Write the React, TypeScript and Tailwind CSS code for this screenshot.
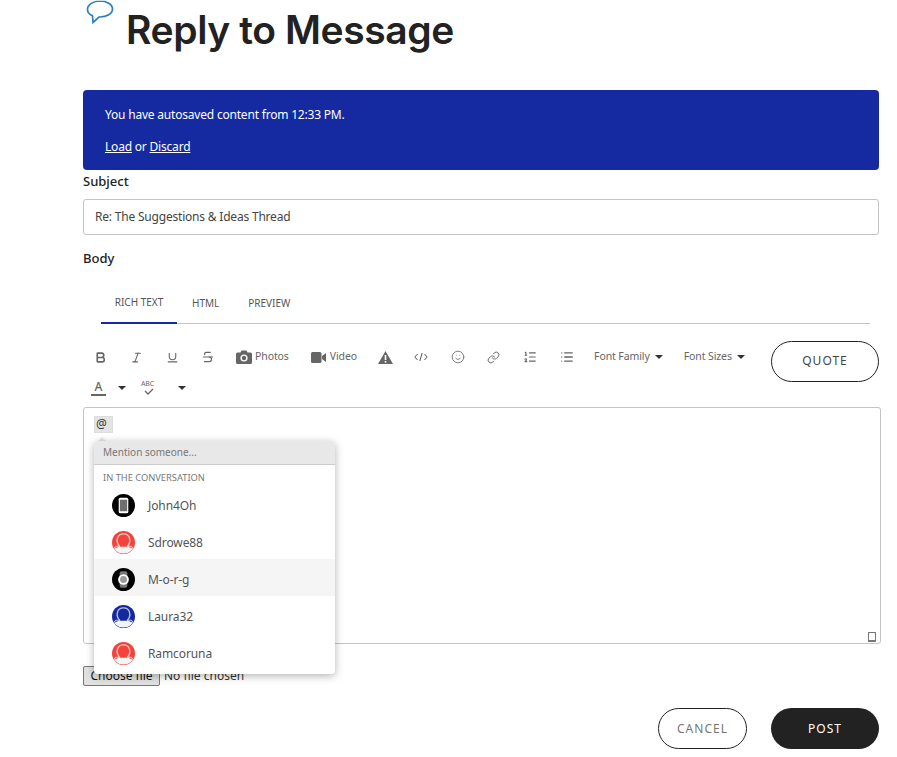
import { Bold, Italic, Link, List, ListOrdered, Smile, Strikethrough, Underline } from 'lucide-react'

const font = "font-['Noto_Sans','Open_Sans',sans-serif]"

function Avatar({ kind }: { kind: string }) {
  if (kind === 'phone') {
    return (
      <svg width="23" height="23" viewBox="0 0 24 24">
        <circle cx="12" cy="12" r="12" fill="#000" />
        <rect x="7" y="4" width="10" height="16" rx="1.6" fill="#fff" />
        <rect x="8.2" y="6" width="7.6" height="12" fill="#6f6f6f" />
      </svg>
    )
  }
  if (kind === 'watch') {
    return (
      <svg width="23" height="23" viewBox="0 0 24 24">
        <circle cx="12" cy="12" r="12" fill="#000" />
        <rect x="8" y="3.5" width="8" height="17" rx="2" fill="#777" />
        <circle cx="12" cy="12" r="5.6" fill="#fff" />
        <circle cx="12" cy="12" r="3.6" fill="#9a9a9a" />
      </svg>
    )
  }
  const color = kind === 'blue' ? '#1428a0' : '#f4433c'
  return (
    <svg width="23" height="23" viewBox="0 0 24 24">
      <circle cx="12" cy="12" r="12" fill={color} />
      <path d="M2.2 18.5A12 12 0 0 0 21.8 18.5L17 16.5H7Z" fill="#f1f5f3" />
      <path d="M8 16C3.5 11 5 3 12 3S20.5 11 16 16" fill="none" stroke="#fff" strokeOpacity="0.7" strokeWidth="1.4" />
      <path d="M8.5 16H4L2.2 17.8M15.5 16H20L21.8 17.8" fill="none" stroke="#fff" strokeOpacity="0.7" strokeWidth="1.1" />
    </svg>
  )
}

const people = [
  { name: 'John4Oh', kind: 'phone', active: false },
  { name: 'Sdrowe88', kind: 'red', active: false },
  { name: 'M-o-r-g', kind: 'watch', active: true },
  { name: 'Laura32', kind: 'blue', active: false },
  { name: 'Ramcoruna', kind: 'red', active: false },
]

function Caret({ className = '' }: { className?: string }) {
  return (
    <svg width="8" height="4" viewBox="0 0 8 4" className={className}>
      <path d="M0 0h8L4 4z" fill="#333" />
    </svg>
  )
}

function IconBtn({ children }: { children: React.ReactNode }) {
  return <span className="flex w-[36px] items-center justify-center">{children}</span>
}

export default function App() {
  return (
    <div className={`${font} relative h-[757px] w-[897px] overflow-hidden bg-white pl-[83px] pr-[18px] text-[#222]`}>
      {/* 标题 */}
      <div className="relative h-[90px]">
        <svg width="28" height="25" viewBox="0 0 28 25" className="absolute left-[3px] top-0" fill="none">
          <path d="M14 1C7.4 1 1.5 4.5 1.5 9.5c0 2.8 2 5 5 6.3L7 22.5l6-5.5h1c6.6 0 12.5-3.2 12.5-8S20.6 1 14 1z" stroke="#2c7fb8" strokeWidth="1.7" />
        </svg>
        <h1 className="pl-[43px] pt-[6px] font-['Inter',sans-serif] text-[39px] font-semibold leading-[48px] tracking-[-0.4px] text-[#222]">
          Reply to Message
        </h1>
      </div>

      <div className="h-[80px] rounded-[4px] bg-[#152aa0] pl-[22px] pt-[16px] text-[12px] leading-[18px] tracking-[-0.2px] text-white">
        <p>You have autosaved content from 12:33 PM.</p>
        <p className="mt-[14px]">
          <span className="underline">Load</span> or <span className="underline">Discard</span>
        </p>
      </div>

      <label className="mt-[2px] block text-[13px] font-medium leading-[18px]">Subject</label>
      <div className="mt-[9px] flex h-[36px] items-center rounded-[3px] border border-[#c4c4c4] pl-[11px] text-[12px] tracking-[-0.2px] text-[#444]">
        Re: The Suggestions &amp; Ideas Thread
      </div>
      <label className="mt-[14px] block text-[13px] font-medium leading-[18px]">Body</label>

      {/* 选项卡 */}
      <div className="ml-[18px] mr-[9px] mt-[16px] flex h-[41px] items-stretch border-b border-[#c4c4c4] text-[10px] text-[#555]">
        <div className="-mb-px flex w-[76px] items-center justify-center border-b-2 border-[#152aa0]">RICH TEXT</div>
        <div className="ml-[15px] flex items-center">HTML</div>
        <div className="ml-[29px] flex items-center">PREVIEW</div>
      </div>

      {/* 工具栏 */}
      <div className="flex h-[83px] items-start justify-between pt-[17px] text-[10.5px] tracking-[-0.1px] text-[#666]">
        <div>
          <div className="-ml-px flex h-[32px] items-center">
            <IconBtn><Bold size={13} strokeWidth={3} /></IconBtn>
            <IconBtn><Italic size={13} strokeWidth={2} /></IconBtn>
            <IconBtn><Underline size={13} strokeWidth={2} /></IconBtn>
            <IconBtn><Strikethrough size={14} strokeWidth={2} /></IconBtn>
            <svg width="16" height="14" viewBox="0 0 16 14" className="ml-[10px]">
              <path d="M1.5 2.5H4.5L5.5.5H10.5L11.5 2.5H14.5A1.5 1.5 0 0 1 16 4V12.5A1.5 1.5 0 0 1 14.5 14H1.5A1.5 1.5 0 0 1 0 12.5V4A1.5 1.5 0 0 1 1.5 2.5Z" fill="#666" />
              <circle cx="8" cy="8" r="3.6" fill="#fff" />
              <circle cx="8" cy="8" r="2.2" fill="#666" />
            </svg>
            <span className="ml-[3px]">Photos</span>
            <svg width="15" height="11" viewBox="0 0 15 11" className="ml-[22px]">
              <rect width="10.5" height="11" rx="1.5" fill="#666" />
              <path d="M11 4L15 1V10L11 7Z" fill="#666" />
            </svg>
            <span className="ml-[4px]">Video</span>
            <svg width="15" height="13" viewBox="0 0 15 13" className="ml-[21px]">
              <path d="M7.5 0L15 13H0Z" fill="#666" />
              <rect x="6.7" y="4" width="1.6" height="5" fill="#fff" />
              <rect x="6.7" y="10" width="1.6" height="1.6" fill="#fff" />
            </svg>
            <svg width="14" height="10" viewBox="0 0 14 10" className="ml-[21px]" fill="none" stroke="#555" strokeWidth="1">
              <path d="M3.5 2L.8 5l2.7 3M10.5 2l2.7 3-2.7 3M8.2 1L5.8 9" />
            </svg>
            <Smile size={14} strokeWidth={1.4} className="ml-[23px]" />
            <Link size={13} strokeWidth={1.8} className="ml-[22px]" />
            <ListOrdered size={14} strokeWidth={2} className="ml-[23px]" />
            <List size={14} strokeWidth={2.2} className="ml-[23px]" />
            <span className="ml-[20px]">Font Family</span>
            <Caret className="ml-[5px]" />
            <span className="ml-[21px]">Font Sizes</span>
            <Caret className="ml-[5px]" />
          </div>
          <div className="flex h-[30px] items-center">
            <span className="ml-[8px] flex h-[16px] w-[15px] justify-center border-b-2 border-[#666] text-[12px] font-medium leading-[14px]">A</span>
            <Caret className="ml-[12px]" />
            <span className="relative ml-[15px] block h-[14px] w-[14px]">
              <span className="absolute left-0 top-[-1px] text-[7px] leading-[8px]">ABC</span>
              <svg width="10" height="7" viewBox="0 0 10 7" className="absolute bottom-0 left-[3px]" fill="none" stroke="#666" strokeWidth="1.3">
                <path d="M1 3l3 3 5-5" />
              </svg>
            </span>
            <Caret className="ml-[23px]" />
          </div>
        </div>
        <button className="h-[41px] w-[108px] rounded-full border border-[#222] pb-[2px] text-[12px] tracking-[1px] text-[#444]">QUOTE</button>
      </div>

      {/* 编辑区 */}
      <div className="relative z-10 -mr-[2px] h-[237px] rounded-[3px] border border-[#c4c4c4]">
        <div className="absolute left-[10px] top-[8px] h-[17px] w-[19px] border border-[#ddd] bg-[#e4e4e4] pl-px text-[12px] leading-[13px] text-[#333]">@</div>
        <div className="absolute left-[14px] top-[29px] h-0 w-0 border-x-[4px] border-b-[4px] border-x-transparent border-b-[#e8e8e8]" />
        <div className="absolute left-[10px] top-[33px] w-[241px] rounded-[4px] bg-white pb-[4px] shadow-[0_2px_8px_rgba(0,0,0,0.3)]">
          <div className="flex h-[24px] items-center rounded-t-[4px] border-b border-[#ccc] bg-[#e8e8e8] pl-[9px] text-[10px] text-[#777]">Mention someone...</div>
          <div className="pl-[9px] pt-[6px] text-[9.3px] leading-[13px] text-[#777]">IN THE CONVERSATION</div>
          <div className="mt-[1px]">
            {people.map((p) => (
              <div key={p.name} className={`flex h-[37px] items-center pl-[18px] pt-[3px] text-[12px] tracking-[-0.1px] text-[#555] ${p.active ? 'bg-[#f5f5f5]' : ''}`}>
                <Avatar kind={p.kind} />
                <span className="ml-[13px] pt-[2px]">{p.name}</span>
              </div>
            ))}
          </div>
        </div>
        <div className="absolute bottom-[1px] right-[4px] h-[10px] w-[8px] border border-b-2 border-[#777]" />
      </div>

      {/* 文件选择 */}
      <div className="mt-[22px] flex h-[20px] items-center text-[12px] text-[#333]">
        <span className="flex h-[20px] w-[77px] items-center justify-center rounded-[2px] border border-[#777] bg-[#e1e1e1] text-[#111]">Choose file</span>
        <span className="ml-[4px]">No file chosen</span>
      </div>

      <div className="mt-[22px] flex justify-end gap-[24px] text-[12px] tracking-[1px]">
        <button className="h-[41px] w-[89px] rounded-full border border-[#222] text-[#777]">CANCEL</button>
        <button className="h-[41px] w-[108px] rounded-full bg-[#222] text-white">POST</button>
      </div>
    </div>
  )
}
